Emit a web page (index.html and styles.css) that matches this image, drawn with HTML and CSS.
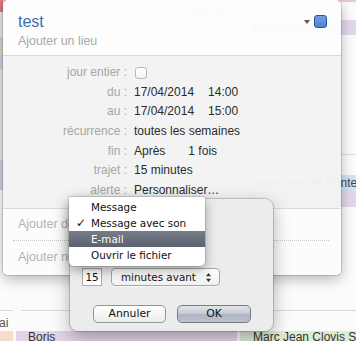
FILE: index.html
```html
<!DOCTYPE html>
<html lang="fr">
<head>
<meta charset="utf-8">
<title>Événement</title>
<link rel="stylesheet" href="styles.css">
</head>
<body>
<div class="screen">
  <div class="calendar">
    <div class="cal-top">
      <div class="edge">
        <i class="seg s-red"></i>
        <i class="seg s-pale"></i>
        <i class="seg s-green"></i>
        <i class="seg s-lav"></i>
        <i class="seg s-pale2"></i>
        <i class="seg s-lav2"></i>
      </div>
      <div class="cal-main">
        <div class="today-line"></div>
        <div class="day-head">ven. 16</div>
        <div class="ev ev-dome">Dome</div>
        <div class="week-line"></div>
        <div class="day-num">25</div>
        <div class="ev ev-vac">Vacances de Printemps</div>
        <div class="ev ev-lav"></div>
      </div>
    </div>
    <div class="cal-bottom">
      <div class="sep-row"><i class="sep-a"></i><i class="sep-b"></i></div>
      <div class="month">ai</div>
      <div class="ev-row">
        <span class="ev-peach"></span>
        <span class="ev-boris">Boris</span>
        <span class="ev-marc">Marc Jean Clovis Sylvain</span>
      </div>
    </div>
  </div>

  <div class="card">
    <div class="card-head">
      <div class="title">
        <h1>test</h1>
        <p>Ajouter un lieu</p>
      </div>
      <div class="controls">
        <svg class="tri" width="6" height="4" viewBox="0 0 6 4"><path d="M0 0H6L3 4Z" fill="#5a5a5a"/></svg>
        <span class="swatch"></span>
      </div>
    </div>
    <div class="card-body">
      <span class="lbl">jour entier :</span><span class="val"><span class="check"></span></span>
      <span class="lbl">du :</span><span class="val">17/04/2014<span class="time">14:00</span></span>
      <span class="lbl">au :</span><span class="val">17/04/2014<span class="time">15:00</span></span>
      <span class="lbl">récurrence :</span><span class="val">toutes les semaines</span>
      <span class="lbl">fin :</span><span class="val">Après<span class="count">1 fois</span></span>
      <span class="lbl">trajet :</span><span class="val">15 minutes</span>
      <span class="lbl">alerte :</span><span class="val">Personnaliser…</span>
    </div>
    <div class="card-foot">
      <div class="add add1">Ajouter des invités</div>
      <div class="dots"></div>
      <div class="add add2">Ajouter notes, URL ou pièces jointes</div>
    </div>
  </div>

  <div class="sheet">
    <div class="alert-row">
      <span class="num">15</span>
      <span class="popup"><span>minutes avant</span>
        <svg width="5" height="9" viewBox="0 0 5 9"><path d="M2.5 0L5 3.2H0Z M2.5 9L5 5.8H0Z" fill="#333"/></svg>
      </span>
    </div>
    <div class="buttons">
      <span class="btn btn-cancel">Annuler</span>
      <span class="btn btn-ok">OK</span>
    </div>
    <ul class="menu">
      <li>Message</li>
      <li class="checked"><span class="tick">✓</span>Message avec son</li>
      <li class="hl">E-mail</li>
      <li>Ouvrir le fichier</li>
    </ul>
  </div>
</div>
</body>
</html>
```

FILE: styles.css
```css
* { box-sizing: border-box; margin: 0; padding: 0; }
html, body { width: 356px; height: 341px; overflow: hidden; }
body { font-family: "Liberation Sans", Arial, sans-serif; background: #fbfbfb; color: #333; }

.screen { position: relative; width: 356px; height: 341px; overflow: hidden; background: #fbfbfb; }

/* background calendar */
.cal-top { display: flex; height: 275px; }
.edge { width: 3px; flex: none; display: flex; flex-direction: column; }
.seg { display: block; }
.s-red { height: 12px; background: #d9797e; }
.s-pale { height: 25px; background: #efe7ea; }
.s-green { height: 20px; background: #d3dccb; }
.s-lav { height: 12px; background: #d8cade; }
.s-pale2 { height: 91px; background: #ece6e8; }
.s-lav2 { height: 30px; background: #dacde1; }

.cal-main { flex: 1; display: flex; flex-direction: column; }
.today-line { height: 2px; background: #f1c5c9; }
.day-head { height: 18px; line-height: 18px; padding-left: 183px; font-size: 12px; color: #777; }
.ev { white-space: nowrap; overflow: hidden; }
.ev-dome { height: 15px; line-height: 15px; margin-left: 247px; padding-left: 4px; background: #e3d7eb; font-size: 11px; color: #555; }
.week-line { height: 1px; background: #dedede; margin-top: 119px; }
.day-num { height: 20px; padding: 3px 0 0 213px; line-height: 17px; font-size: 12px; color: #888; }
.ev-vac { height: 16px; line-height: 16px; margin-left: 247px; padding-left: 4px; background: #d7e2f1; color: #3b4656; font-size: 12px; }
.ev-lav { height: 16px; margin-left: 247px; background: #e3d7eb; }

.cal-bottom { display: flex; flex-direction: column; }
.sep-row { display: flex; gap: 8px; height: 1px; margin-top: 35px; }
.sep-row i { display: block; height: 1px; background: #d9d9d9; }
.sep-a { width: 13px; }
.sep-b { flex: 1; }
.month { height: 20px; padding-top: 5px; line-height: 15px; font-size: 12px; color: #555; margin-left: -1px; }
.ev-row { display: flex; gap: 3px; height: 20px; font-size: 12px; line-height: 13px; color: #333; white-space: nowrap; }
.ev-peach { width: 13px; background: #f8dccb; }
.ev-boris { width: 221px; background: #e1d4e7; padding-left: 12px; }
.ev-marc { flex: 1; background: #ddecd3; padding-left: 13px; overflow: hidden; }

/* event popover */
.card {
  position: absolute; left: 3px; top: 0; width: 338px; height: 275px;
  border-radius: 5px; overflow: hidden;
  box-shadow: 0 0 0 1px rgba(0,0,0,.13), 0 4px 14px rgba(0,0,0,.28);
  display: flex; flex-direction: column;
}
.card-head {
  height: 56px; flex: none; display: flex; padding: 12px 14px 0 15px;
  background: rgba(253,253,253,.975); border-bottom: 1px solid #d8d8d8;
}
.title { flex: 1; }
.title h1 { font-size: 16px; font-weight: normal; line-height: 19px; color: #3f6faa; }
.title p { font-size: 12.4px; line-height: 16px; margin-top: 2px; color: #a9a9a9; }
.controls { display: flex; align-items: center; gap: 4px; height: 13px; margin-top: 3px; }
.swatch { width: 13px; height: 13px; border-radius: 3px; border: 1px solid #2e4f9c; background: linear-gradient(#6f9de2, #5183d1); }

.card-body {
  height: 153px; flex: none; padding-top: 7px;
  background: rgba(243,243,243,.975); border-bottom: 1px solid #dcdcdc;
  display: grid; grid-template-columns: 124px 1fr; column-gap: 7px; align-content: start;
  font-size: 12px; line-height: 19.67px;
}
.lbl { text-align: right; color: #a6a6a6; white-space: nowrap; }
.val { color: #2b2b2b; white-space: nowrap; }
.time { margin-left: 14px; }
.count { margin-left: 23px; }
.check { display: block; width: 12px; height: 12px; margin: 4px 0 0 1px; border: 1px solid #b9b9b9; border-radius: 3px; background: linear-gradient(#fff, #f3f3f3); }

.card-foot { flex: 1; background: rgba(252,252,252,.98); padding: 0 12px 0 10px; }
.add { font-size: 12.5px; color: #b2b2b2; padding-left: 5px; white-space: nowrap; overflow: hidden; }
.add1 { height: 31px; line-height: 31px; }
.dots { border-top: 1px dotted #c6c6c6; }
.add2 { line-height: 32px; }

/* alert sheet */
.sheet {
  position: absolute; left: 70px; top: 199px; width: 203px; height: 132px;
  background: #ececec; border-radius: 8px;
  box-shadow: 0 0 0 1px rgba(0,0,0,.17), 0 6px 18px rgba(0,0,0,.32);
  font-family: "DejaVu Sans", sans-serif; font-size: 10.4px; color: #111;
  padding: 69px 0 0 12px;
}
.alert-row { display: flex; gap: 9px; height: 18px; }
.num { width: 20px; height: 18px; background: #fff; border: 1px solid #acacac; box-shadow: inset 0 1px 1px rgba(0,0,0,.08); text-align: center; line-height: 16px; }
.popup {
  width: 109px; height: 18px; display: flex; align-items: center; justify-content: space-between;
  padding: 0 8px 0 9px; border: 1px solid #a6a6a6; border-radius: 4px;
  background: linear-gradient(#ffffff, #f1f1f1); box-shadow: 0 1px 0 rgba(255,255,255,.6);
}
.buttons { display: flex; gap: 11px; margin: 19px 0 0 11px; }
.btn { width: 73px; height: 18px; border-radius: 5px; text-align: center; line-height: 16px; font-size: 10.8px; }
.btn-cancel { border: 1px solid #939393; background: linear-gradient(#ffffff, #ededed); }
.btn-ok { width: 74px; border: 1px solid #767b85; background: linear-gradient(#e3e6eb 0%, #c3c9d2 50%, #adb4c0 51%, #bcc3cd 100%); }

.menu {
  position: absolute; left: -1px; top: -2px; width: 136px; list-style: none;
  padding: 2px 0 3px; background: rgba(255,255,255,.98); border-radius: 2px 2px 5px 5px;
  box-shadow: 0 0 0 1px rgba(0,0,0,.12), 0 4px 12px rgba(0,0,0,.35);
}
.menu li { position: relative; height: 16px; line-height: 16px; padding-left: 22px; white-space: nowrap; color: #111; }
.menu .tick { position: absolute; left: 7px; top: 0; font-size: 12px; font-weight: bold; }
.menu .hl { color: #fff; background: linear-gradient(#777c89, #5d6270); }
```
